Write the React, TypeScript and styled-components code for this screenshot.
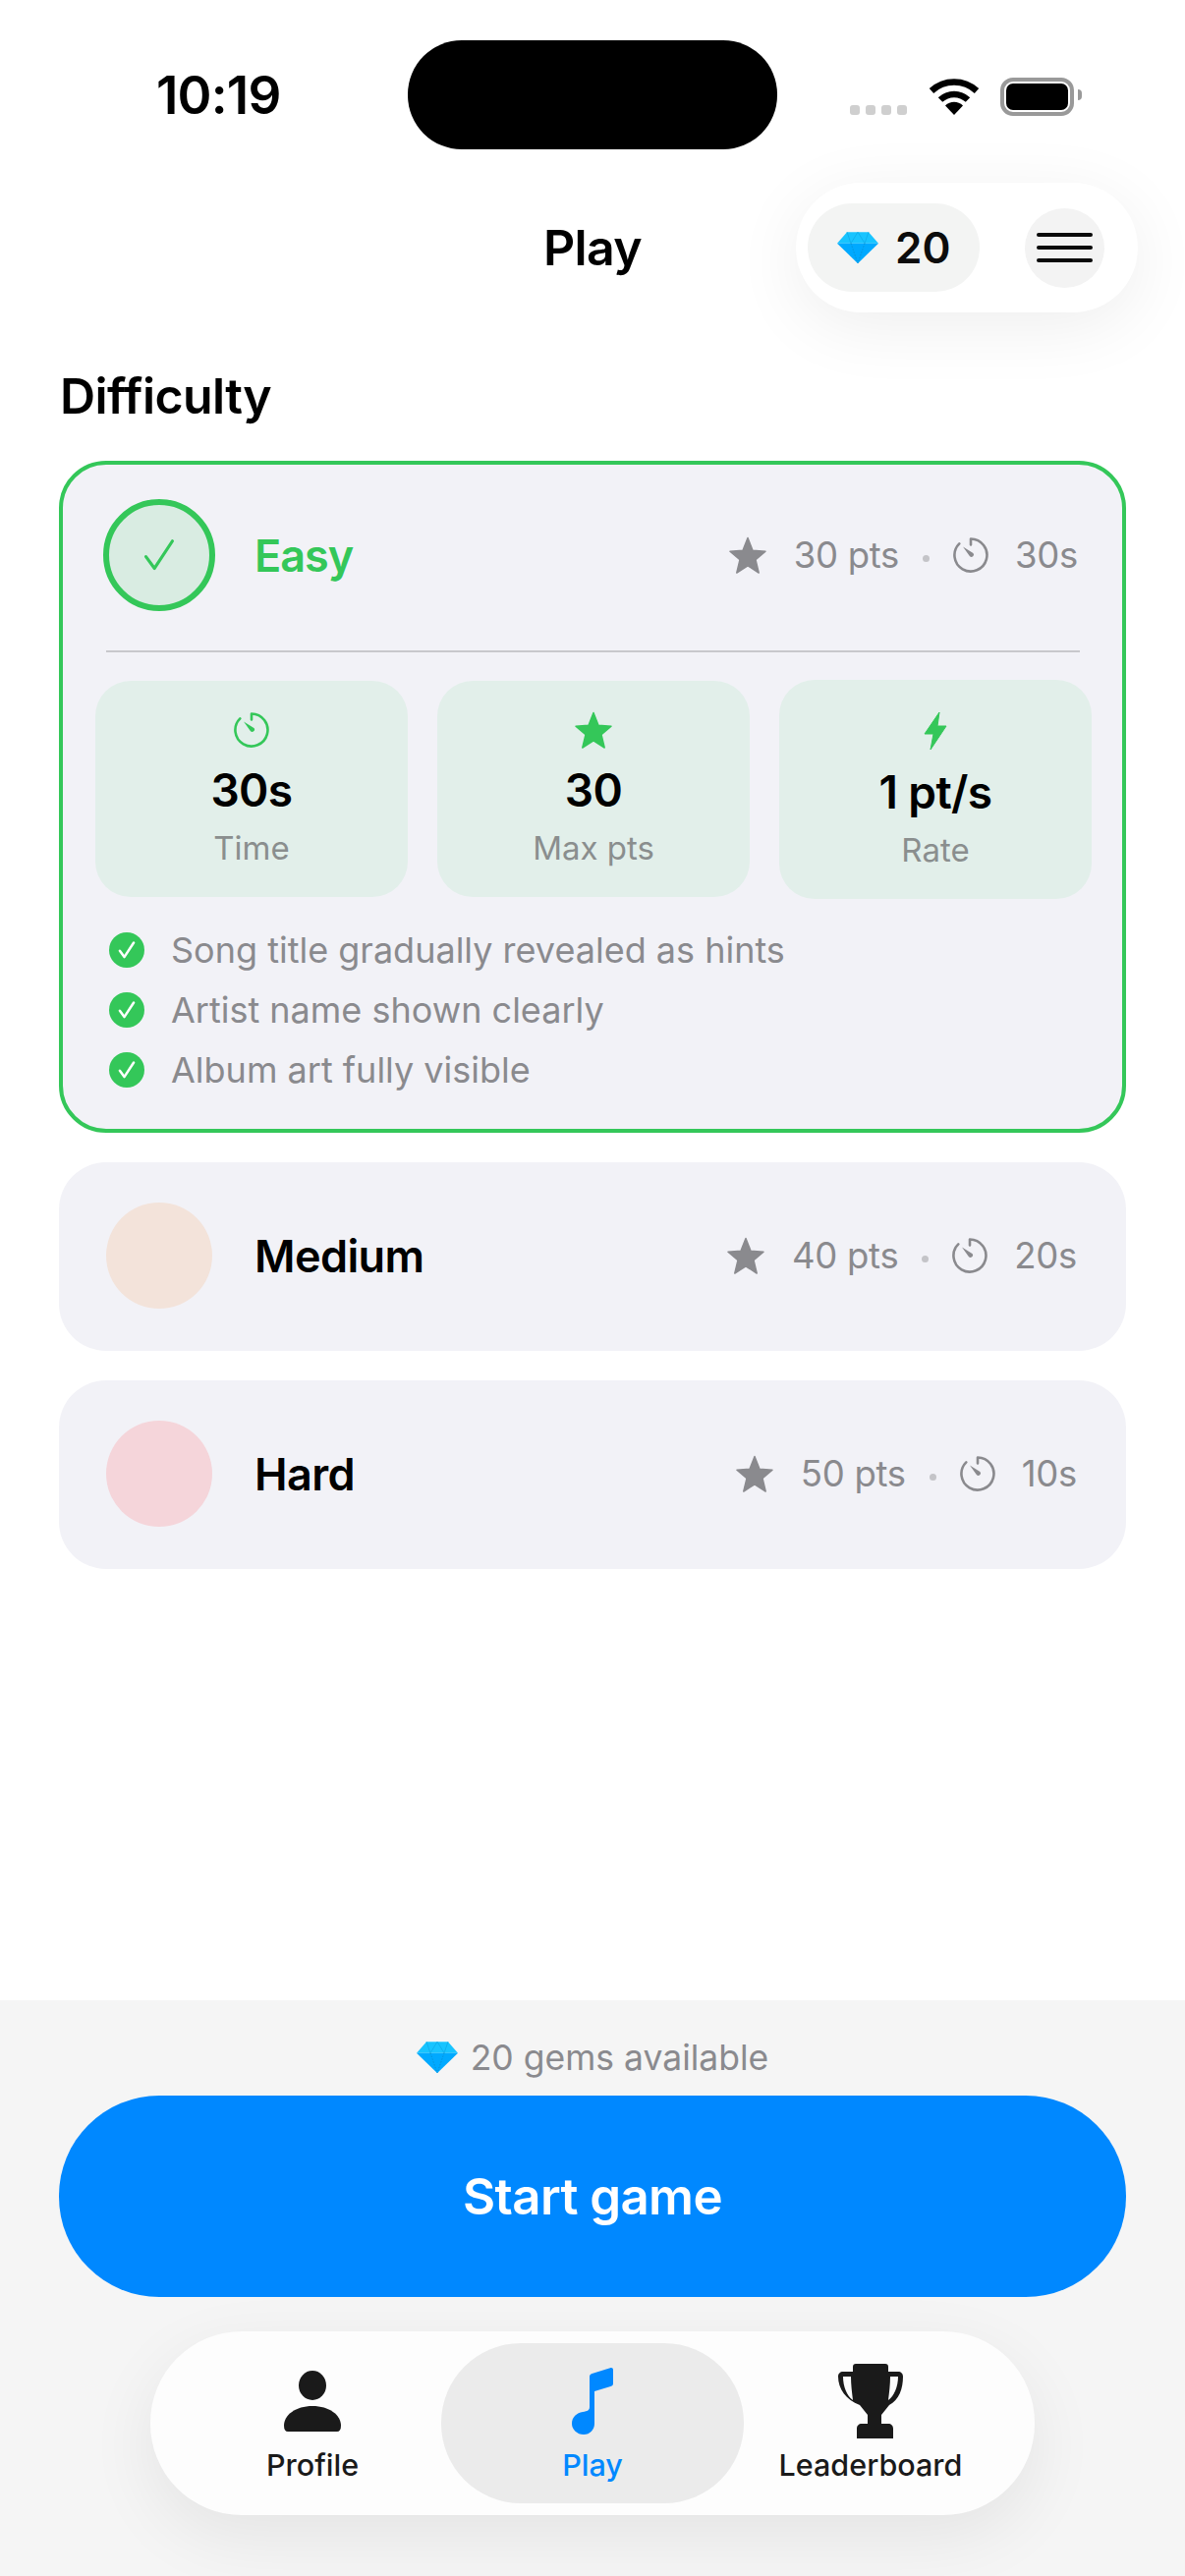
import React from 'react';
import styled, {createGlobalStyle} from 'styled-components';

const GREEN = '#34c759';
const GRAY = '#8a8a8e';
const BLUE = '#0088ff';

const GlobalStyle = createGlobalStyle`
  html, body {
    margin: 0;
    padding: 0;
    background: #fff;
    font-family: Inter, "Noto Sans", sans-serif;
  }
`;

const Screen = styled.div`
  width: 1206px;
  height: 2622px;
  display: flex;
  flex-direction: column;
  overflow: hidden;
  background: #fff;
`;

const StatusBar = styled.div`
  display: flex;
  align-items: center;
  height: 111px;
  padding-top: 41px;
`;

const Time = styled.div`
  width: 256px;
  padding-left: 159px;
  font-size: 53px;
  font-weight: 600;
  letter-spacing: -0.8px;
  line-height: 111px;
  color: #000;
  position: relative;
  top: 1px;
`;

const Island = styled.div`
  width: 376px;
  height: 111px;
  border-radius: 55px;
  background: #000;
`;

const StatusIcons = styled.div`
  display: flex;
  align-items: center;
  margin-left: 74px;
  height: 40px;
  margin-top: 3px;
`;

const SignalDots = styled.div`
  display: flex;
  gap: 6px;
  align-self: flex-end;
  margin-right: 22px;
  margin-bottom: 1px;
`;

const SignalDot = styled.span`
  width: 10px;
  height: 10px;
  border-radius: 3px;
  background: #cfcfcf;
`;

const Battery = styled.div`
  width: 75px;
  height: 39px;
  box-sizing: border-box;
  margin-left: 21px;
  padding: 2px;
  border: 4px solid #999;
  border-radius: 13px;
  position: relative;
  &::before {
    content: '';
    display: block;
    height: 100%;
    border-radius: 7px;
    background: #000;
  }
  &::after {
    content: '';
    position: absolute;
    right: -12px;
    top: 8px;
    width: 4px;
    height: 11px;
    border-radius: 0 5px 5px 0;
    background: #999;
  }
`;

const Header = styled.header`
  position: relative;
  height: 132px;
  margin-top: 34px;
  display: flex;
  align-items: center;
  justify-content: center;
`;

const Title = styled.h1`
  margin: -1px 0 0;
  font-size: 50px;
  font-weight: 600;
  letter-spacing: -0.6px;
  color: #000;
`;

const HeaderPill = styled.div`
  position: absolute;
  left: 810px;
  top: 0;
  width: 348px;
  height: 132px;
  box-sizing: border-box;
  padding: 0 34px 0 12px;
  display: flex;
  align-items: center;
  justify-content: space-between;
  border-radius: 66px;
  background: #fff;
  box-shadow: 0 14px 70px rgba(0, 0, 0, 0.07);
`;

const GemPill = styled.div`
  width: 175px;
  height: 90px;
  border-radius: 45px;
  background: #f3f4f3;
  display: flex;
  align-items: center;
  gap: 17px;
  padding-left: 30px;
  box-sizing: border-box;
  font-size: 44px;
  font-weight: 600;
  color: #0c0c0c;
`;

const MenuButton = styled.div`
  width: 81px;
  height: 81px;
  border-radius: 50%;
  background: #f3f3f3;
  display: flex;
  flex-direction: column;
  align-items: center;
  justify-content: center;
  gap: 9px;
  span {
    width: 57px;
    height: 4px;
    border-radius: 2px;
    background: #0a0a0a;
  }
`;

const Main = styled.main`
  flex: 1;
  padding: 55px 60px 0;
`;

const SectionTitle = styled.h2`
  margin: 0 0 36px 1px;
  font-size: 50px;
  line-height: 60px;
  font-weight: 600;
  letter-spacing: -0.6px;
  color: #000;
`;

const CardList = styled.div`
  display: flex;
  flex-direction: column;
  gap: 30px;
`;

const Card = styled.section<{$selected?: boolean}>`
  box-sizing: border-box;
  border-radius: 48px;
  background: #f2f2f7;
  border: ${p => (p.$selected ? `4px solid ${GREEN}` : 'none')};
  padding: ${p => (p.$selected ? '35px 32px 0 33px' : '41px 50px 43px 48px')};
  height: ${p => (p.$selected ? '684px' : '192px')};
`;

const CardHead = styled.div<{$selected?: boolean}>`
  display: flex;
  align-items: center;
  padding: ${p => (p.$selected ? '0 13px 0 11px' : '0')};
  height: 108px;
  margin: ${p => (p.$selected ? '3px 0' : '0')};
`;

const LevelCircle = styled.div<{$fill: string; $selected?: boolean}>`
  flex: none;
  box-sizing: border-box;
  width: ${p => (p.$selected ? '114px' : '108px')};
  height: ${p => (p.$selected ? '114px' : '108px')};
  margin: ${p => (p.$selected ? '0 -3px' : '0')};
  border-radius: 50%;
  background: ${p => p.$fill};
  border: ${p => (p.$selected ? `6px solid ${GREEN}` : 'none')};
  display: flex;
  align-items: center;
  justify-content: center;
`;

const LevelName = styled.div<{$selected?: boolean}>`
  margin-left: 43px;
  font-size: 45px;
  font-weight: 600;
  letter-spacing: ${p => (p.$selected ? '-1px' : '-0.6px')};
  color: ${p => (p.$selected ? GREEN : '#000')};
`;

const Meta = styled.div`
  margin-left: auto;
  display: flex;
  align-items: center;
  font-size: 36.5px;
  color: ${GRAY};
  letter-spacing: -0.3px;
`;

const MetaText = styled.span`
  margin-left: 27px;
`;

const MetaDot = styled.span`
  width: 7px;
  height: 7px;
  border-radius: 50%;
  background: #c4c4c8;
  margin: 6px 24px 0 24px;
`;

const Divider = styled.div`
  height: 1.5px;
  background: #c8c8cc;
  margin: 43px 11px 28px 11px;
`;

const Stats = styled.div`
  display: grid;
  grid-template-columns: repeat(3, 318px);
  gap: 30px;
  align-items: center;
`;

const StatTile = styled.div<{$tall?: boolean}>`
  box-sizing: border-box;
  height: ${p => (p.$tall ? '223px' : '220px')};
  padding-top: ${p => (p.$tall ? '33px' : '31px')};
  border-radius: 36px;
  background: #e2efea;
  display: flex;
  flex-direction: column;
  align-items: center;
`;

const StatIcon = styled.div`
  height: 38px;
  display: flex;
  align-items: center;
  justify-content: center;
`;

const StatValue = styled.div<{$tall?: boolean}>`
  margin-top: ${p => (p.$tall ? '15px' : '14px')};
  font-size: 46px;
  line-height: 56px;
  font-weight: 600;
  letter-spacing: -0.6px;
  color: #000;
`;

const StatLabel = styled.div`
  margin-top: 11px;
  font-size: 33px;
  line-height: 40px;
  color: #8a8e8e;
`;

const Checklist = styled.ul`
  list-style: none;
  margin: 28px 0 0;
  padding: 0 0 0 14px;
  display: flex;
  flex-direction: column;
  gap: 13px;
`;

const CheckItem = styled.li`
  display: flex;
  align-items: center;
  gap: 27px;
  height: 48px;
  font-size: 36px;
  color: ${GRAY};
`;

const CheckBadge = styled.span`
  flex: none;
  width: 36px;
  height: 36px;
  border-radius: 50%;
  background: ${GREEN};
  display: flex;
  align-items: center;
  justify-content: center;
`;

const Dock = styled.footer`
  height: 586px;
  box-sizing: border-box;
  padding: 34px 60px 0;
  background: #f5f5f5;
  display: flex;
  flex-direction: column;
  align-items: stretch;
`;

const GemsNote = styled.div`
  display: flex;
  align-items: center;
  justify-content: center;
  gap: 13px;
  height: 48px;
  font-size: 35.5px;
  color: ${GRAY};
`;

const StartButton = styled.button`
  margin-top: 15px;
  height: 205px;
  border: none;
  border-radius: 102px;
  background: ${BLUE};
  color: #fff;
  font-family: inherit;
  font-size: 51px;
  font-weight: 600;
  letter-spacing: -0.6px;
`;

const TabBar = styled.nav`
  align-self: center;
  margin-top: 35px;
  width: 900px;
  height: 187px;
  box-sizing: border-box;
  padding: 12px 38px 12px 34px;
  border-radius: 93px;
  background: #fdfdfd;
  box-shadow: 0 22px 70px rgba(0, 0, 0, 0.07);
  display: grid;
  grid-template-columns: 262px 308px 258px;
`;

const Tab = styled.div<{$active?: boolean}>`
  border-radius: 81px;
  background: ${p => (p.$active ? '#ebebeb' : 'transparent')};
  color: ${p => (p.$active ? BLUE : '#1a1a1a')};
  display: flex;
  flex-direction: column;
  align-items: center;
  font-size: 30.5px;
  font-weight: 500;
  line-height: 40px;
`;

const TabIcon = styled.div`
  height: 76px;
  margin-top: 21px;
  margin-bottom: 7px;
  display: flex;
  align-items: center;
  justify-content: center;
`;

const StarIcon = ({size, color}: {size: number; color: string}) => (
  <svg width={size} height={size} viewBox="0 0 40 40">
    <path
      d="M20 2.5l5 12.7 13 1-10 8.6 3.2 13.2L20 30.8 8.8 38l3.2-13.2-10-8.6 13-1z"
      fill={color}
      stroke={color}
      strokeWidth="1.5"
      strokeLinejoin="round"
    />
  </svg>
);

const TimerIcon = ({color}: {color: string}) => (
  <svg width="36" height="36" viewBox="0 0 36 36" fill="none">
    <path
      d="M18 1.5v6M18 1.5A16.5 16.5 0 1 1 6.3 6.3"
      stroke={color}
      strokeWidth="2.6"
      strokeLinecap="round"
    />
    <path d="M10 9.500l10.400 6.400a2.400 2.400 0 1 1-3.600 3.200z" fill={color} />
  </svg>
);

const BoltIcon = () => (
  <svg width="24" height="40" viewBox="0 0 24 40">
    <path
      d="M16 1L1 23h9L7 39l16-24h-9z"
      fill={GREEN}
      stroke={GREEN}
      strokeLinejoin="round"
    />
  </svg>
);

const CheckMark = ({size, color, width}: {size: number; color: string; width: number}) => (
  <svg width={size} height={size} viewBox="0 0 24 24" fill="none">
    <path
      d="M3.500 13l5.500 7.500L20.500 3"
      stroke={color}
      strokeWidth={width}
      strokeLinecap="round"
      strokeLinejoin="round"
    />
  </svg>
);

const GemIcon = ({width}: {width: number}) => (
  <svg width={width} height={width * 0.77} viewBox="0 0 42 32">
    <path d="M0 11.500L10 0h22l10 11.500z" fill="#18c4ff" />
    <path d="M0 11.500h42L21 32z" fill="#00a9ff" />
    <path d="M10 0l4 11.500L21 0l7 11.500L32 0" fill="none" stroke="#0ea8e6" strokeWidth="0.7" />
    <path d="M14 11.500L21 32l7-20.500" fill="none" stroke="#0b86c4" strokeWidth="0.7" strokeDasharray="1.5 1.5" />
  </svg>
);

const WifiIcon = () => (
  <svg width="52" height="38" viewBox="0 0 52 38" fill="none">
    <path d="M3 13.500C16 1.500 36 1.500 49 13.500" stroke="#000" strokeWidth="6.500" />
    <path d="M12 22.500C20 15 32 15 40 22.500" stroke="#000" strokeWidth="6.500" />
    <path d="M17 28.500C22 23.500 30 23.500 35 28.500L26 38z" fill="#000" />
  </svg>
);

const PersonIcon = () => (
  <svg width="58" height="62" viewBox="0 0 58 62">
    <ellipse cx="29" cy="15" rx="14" ry="15" fill="#1a1a1a" />
    <path
      d="M0 56C0 45 12 36 29 36s29 9 29 20c0 4-1.500 6-4 6H4c-2.500 0-4-2-4-6z"
      fill="#1a1a1a"
    />
  </svg>
);

const NoteIcon = () => (
  <svg width="42" height="68" viewBox="0 0 42 68">
    <path
      d="M18 9c0-1.500 .8-2.500 2.500-3L39 .2c1.800-.5 3 .3 3 2V16c0 1.500-.8 2.500-2.500 3L23 24v33c0 6-4.500 11-11 11S0 63 0 57c0-7 5-11 11-12 5-1 7-1.500 7-5z"
      fill={BLUE}
    />
  </svg>
);

const TrophyIcon = () => (
  <svg width="66" height="76" viewBox="0 0 66 76">
    <path
      d="M15 3c0-2 1-3 3-3h30c2 0 3 1 3 3v5h10c3 0 5 2 5 5 0 12-4 24-14 29l-8 10v9h7c3 0 5 2 5 5v11H19V66c0-3 2-5 5-5h6v-9l-8-10C8 37 0 25 0 13c0-3 2-5 5-5h10zM5 13c0 10 4 20 10 24-1-8-2-16-2-24zm56 0h-8c0 8-1 16-2 24 6-4 10-14 10-24z"
      fill="#1a1a1a"
      fillRule="evenodd"
    />
  </svg>
);

const levels = [
  {name: 'Medium', fill: '#f3e3da', pts: 40, secs: 20},
  {name: 'Hard', fill: '#f5d5da', pts: 50, secs: 10},
];

const stats = [
  {icon: <TimerIcon color={GREEN} />, value: '30s', label: 'Time'},
  {icon: <StarIcon size={40} color={GREEN} />, value: '30', label: 'Max pts'},
  {icon: <BoltIcon />, value: '1 pt/s', label: 'Rate', tall: true},
];

const rules = [
  'Song title gradually revealed as hints',
  'Artist name shown clearly',
  'Album art fully visible',
];

const tabs = [
  {label: 'Profile', icon: <PersonIcon />},
  {label: 'Play', icon: <NoteIcon />, active: true},
  {label: 'Leaderboard', icon: <TrophyIcon />},
];

const LevelMeta = ({pts, secs}: {pts: number; secs: number}) => (
  <Meta>
    <StarIcon size={40} color={GRAY} />
    <MetaText>{pts} pts</MetaText>
    <MetaDot />
    <TimerIcon color={GRAY} />
    <MetaText>{secs}s</MetaText>
  </Meta>
);

export default function App() {
  return (
    <Screen>
      <GlobalStyle />
      <StatusBar>
        <Time>10:19</Time>
        <Island />
        <StatusIcons>
          <SignalDots>
            <SignalDot />
            <SignalDot />
            <SignalDot />
            <SignalDot />
          </SignalDots>
          <WifiIcon />
          <Battery />
        </StatusIcons>
      </StatusBar>

      <Header>
        <Title>Play</Title>
        <HeaderPill>
          <GemPill>
            <GemIcon width={42} />
            20
          </GemPill>
          <MenuButton>
            <span />
            <span />
            <span />
          </MenuButton>
        </HeaderPill>
      </Header>

      <Main>
        <SectionTitle>Difficulty</SectionTitle>
        <CardList>
          <Card $selected>
            <CardHead $selected>
              <LevelCircle $fill="#d9ece2" $selected>
                <CheckMark size={38} color={GREEN} width={2} />
              </LevelCircle>
              <LevelName $selected>Easy</LevelName>
              <LevelMeta pts={30} secs={30} />
            </CardHead>
            <Divider />
            <Stats>
              {stats.map(stat => (
                <StatTile key={stat.label} $tall={stat.tall}>
                  <StatIcon>{stat.icon}</StatIcon>
                  <StatValue $tall={stat.tall}>{stat.value}</StatValue>
                  <StatLabel>{stat.label}</StatLabel>
                </StatTile>
              ))}
            </Stats>
            <Checklist>
              {rules.map(rule => (
                <CheckItem key={rule}>
                  <CheckBadge>
                    <CheckMark size={20} color="#fff" width={3} />
                  </CheckBadge>
                  {rule}
                </CheckItem>
              ))}
            </Checklist>
          </Card>
          {levels.map(level => (
            <Card key={level.name}>
              <CardHead>
                <LevelCircle $fill={level.fill} />
                <LevelName>{level.name}</LevelName>
                <LevelMeta pts={level.pts} secs={level.secs} />
              </CardHead>
            </Card>
          ))}
        </CardList>
      </Main>

      <Dock>
        <GemsNote>
          <GemIcon width={42} />
          20 gems available
        </GemsNote>
        <StartButton>Start game</StartButton>
        <TabBar>
          {tabs.map(tab => (
            <Tab key={tab.label} $active={tab.active}>
              <TabIcon>{tab.icon}</TabIcon>
              {tab.label}
            </Tab>
          ))}
        </TabBar>
      </Dock>
    </Screen>
  );
}
